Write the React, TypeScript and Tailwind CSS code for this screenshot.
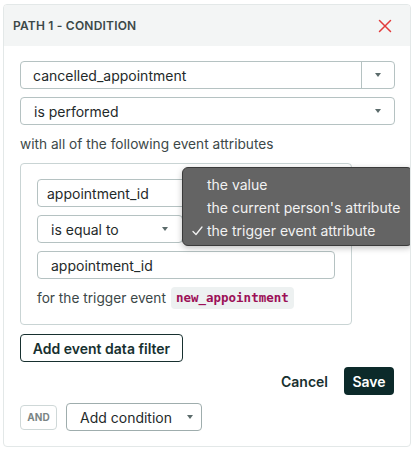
import React from "react";

const Caret = () => (
  <svg width="6" height="4" viewBox="0 0 6 4" className="shrink-0">
    <path d="M0 0 L6 0 L3 4 Z" fill="#5b6b6b" />
  </svg>
);

export default function App() {
  return (
    <div className="w-[418px] h-[453px] bg-white pt-[4px] pl-[3px]" style={{ fontFamily: "Inter, 'Noto Sans', sans-serif" }}>
      <div className="w-[408px] h-[443px] border border-[#e3e8e8] rounded-[4px] overflow-hidden flex flex-col">
        <div className="h-[41px] bg-[#f3f5f5] flex items-center justify-between pl-[9px] pr-[18px]">
          <span className="text-[12px] font-semibold text-[#3c4848] tracking-[0.2px]">PATH 1 - CONDITION</span>
          <svg width="14" height="14" viewBox="0 0 14 14">
            <path d="M1.5 1.5 L12.5 12.5 M12.5 1.5 L1.5 12.5" stroke="#e23b3b" strokeWidth="1.5" strokeLinecap="round" />
          </svg>
        </div>
        <div className="relative flex flex-col pl-[16px] pr-[15px] pt-[15px]">
          <div className="h-[28px] w-[375px] border border-[#b5c2c2] rounded-[4px] flex items-stretch">
            <div className="flex-1 flex items-center pl-[12px] text-[14px] text-[#1f2a2a]">cancelled_appointment</div>
            <div className="w-[33px] border-l border-[#b5c2c2] flex items-center justify-center"><Caret /></div>
          </div>
          <div className="mt-[8px] h-[28px] w-[375px] border border-[#b5c2c2] rounded-[4px] flex items-center justify-between pl-[13px] pr-[13px] text-[14px] text-[#1f2a2a]">
            <span>is performed</span>
            <Caret />
          </div>
          <div className="mt-[9px] text-[13.7px] text-[#3c4848] leading-[20px]">with all of the following event attributes</div>
          <div className="mt-[9px] w-[332px] h-[162px] border border-[#c9d4d4] rounded-[4px] pl-[16px] pt-[15px]">
            <div className="h-[28px] w-[160px] border border-[#b5c2c2] rounded-[4px] flex items-center pl-[9px] text-[14px] text-[#1f2a2a]">appointment_id</div>
            <div className="mt-[8px] h-[28px] w-[146px] border border-[#b5c2c2] rounded-[4px] flex items-center justify-between pl-[13px] pr-[14px] text-[14px] text-[#1f2a2a]">
              <span>is equal to</span>
              <Caret />
            </div>
            <div className="mt-[8px] h-[28px] w-[298px] border border-[#b5c2c2] rounded-[4px] flex items-center pl-[13px] text-[14px] text-[#1f2a2a]">appointment_id</div>
            <div className="mt-[8px] flex items-center text-[13.7px] text-[#3c4848]">
              <span>for the trigger event</span>
              <span className="ml-[5px] h-[22px] px-[5px] rounded-[4px] bg-[#edf1f1] flex items-center text-[12.5px] font-bold text-[#9c1057]" style={{ fontFamily: "'DejaVu Sans Mono', monospace" }}>new_appointment</span>
            </div>
          </div>
          <div className="mt-[9px] h-[28px] w-[163px] border border-[#17302f] rounded-[4px] flex items-center justify-center text-[14px] font-semibold text-[#17302f]">Add event data filter</div>
          <div className="mt-[5px] flex items-center justify-end pr-[1px]">
            <span className="text-[14px] font-semibold text-[#17302f] mr-[16px]">Cancel</span>
            <div className="h-[28px] w-[50px] bg-[#0c2a2a] rounded-[4px] flex items-center justify-center text-[14px] font-semibold text-white">Save</div>
          </div>
          <div className="mt-[8px] flex items-center">
            <div className="h-[25px] w-[37px] border border-[#cfd8d8] rounded-[4px] flex items-center justify-center text-[10px] font-bold text-[#7b8585]">AND</div>
            <div className="ml-[9px] h-[28px] w-[136px] border border-[#9fadad] rounded-[4px] flex items-center pl-[13px] text-[14px] text-[#1f2a2a]">
              <span>Add condition</span>
              <span className="ml-[15px]"><Caret /></span>
            </div>
          </div>
          <div className="absolute left-[178px] top-[121px] w-[231px] h-[79px] bg-[#646464] border border-[#3a3a3a] rounded-[6px] shadow-[0_2px_6px_rgba(0,0,0,0.25)] text-[14px] text-[#f2f2f2] pt-[5px] leading-[23px]">
            <div className="pl-[24px]">the value</div>
            <div className="pl-[24px]">the current person's attribute</div>
            <div className="pl-[9px] flex items-center">
              <svg width="11" height="10" viewBox="0 0 11 10" className="mr-[4px]">
                <path d="M1 5.5 L4 8.5 L10 1" stroke="#f2f2f2" strokeWidth="1.3" fill="none" strokeLinecap="round" strokeLinejoin="round" />
              </svg>
              <span>the trigger event attribute</span>
            </div>
          </div>
        </div>
      </div>
    </div>
  );
}
